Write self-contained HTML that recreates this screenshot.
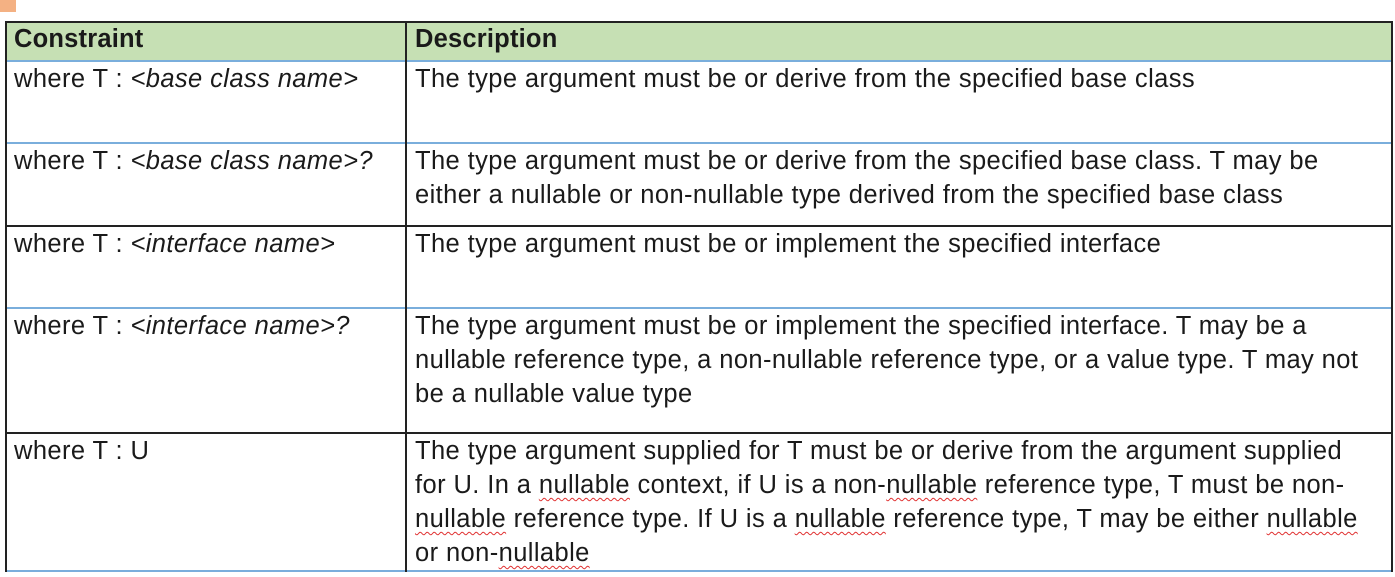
<!DOCTYPE html>
<html><head><style>
body{margin:0;width:1395px;height:577px;background:#fff;position:relative;overflow:hidden;font-family:"Liberation Sans",Arial,sans-serif;color:#1a1a1a;font-size:25.5px;letter-spacing:0.4px}
.sq{position:absolute;left:0;top:0;width:16px;height:12px;background:#f4b183}
.h{position:absolute;background:#222;height:2px;left:5px;width:1388px}
.b{background:#7aaedc}
.v{position:absolute;background:#222;width:2px}
.hdr{position:absolute;left:6px;top:23px;width:1386px;height:38px;background:#c6e0b4}
.t{position:absolute;line-height:34px;white-space:nowrap}
.bold{font-weight:bold;letter-spacing:0.2px}
i{font-style:italic}
u{text-decoration:underline wavy #e03030;text-decoration-thickness:1px;text-underline-offset:4px}
</style></head><body>
<div class="sq"></div>
<div class="hdr"></div>
<div class="h" style="top:21px"></div>
<div class="h b" style="top:60px"></div>
<div class="h b" style="top:142px"></div>
<div class="h" style="top:225px"></div>
<div class="h b" style="top:307px"></div>
<div class="h" style="top:432px"></div>
<div class="h b" style="top:570px"></div>
<div class="v" style="left:5px;top:21px;height:551px"></div>
<div class="v" style="left:405px;top:21px;height:551px"></div>
<div class="v" style="left:1391px;top:21px;height:551px"></div>

<div class="t bold" style="left:14px;top:22px">Constraint</div>
<div class="t bold" style="left:415px;top:22px">Description</div>

<div class="t" style="left:14px;top:62px">where T : <i>&lt;base class name&gt;</i></div>
<div class="t" style="left:415px;top:62px">The type argument must be or derive from the specified base class</div>

<div class="t" style="left:14px;top:144px">where T : <i>&lt;base class name&gt;?</i></div>
<div class="t" style="left:415px;top:144px">The type argument must be or derive from the specified base class. T may be<br>either a nullable or non-nullable type derived from the specified base class</div>

<div class="t" style="left:14px;top:227px">where T : <i>&lt;interface name&gt;</i></div>
<div class="t" style="left:415px;top:227px">The type argument must be or implement the specified interface</div>

<div class="t" style="left:14px;top:309px">where T : <i>&lt;interface name&gt;?</i></div>
<div class="t" style="left:415px;top:309px">The type argument must be or implement the specified interface. T may be a<br>nullable reference type, a non-nullable reference type, or a value type. T may not<br>be a nullable value type</div>

<div class="t" style="left:14px;top:434px">where T : U</div>
<div class="t" style="left:415px;top:434px">The type argument supplied for T must be or derive from the argument supplied<br>for U. In a <u>nullable</u> context, if U is a non-<u>nullable</u> reference type, T must be non-<br><u>nullable</u> reference type. If U is a <u>nullable</u> reference type, T may be either <u>nullable</u><br>or non-<u>nullable</u></div>
</body></html>
